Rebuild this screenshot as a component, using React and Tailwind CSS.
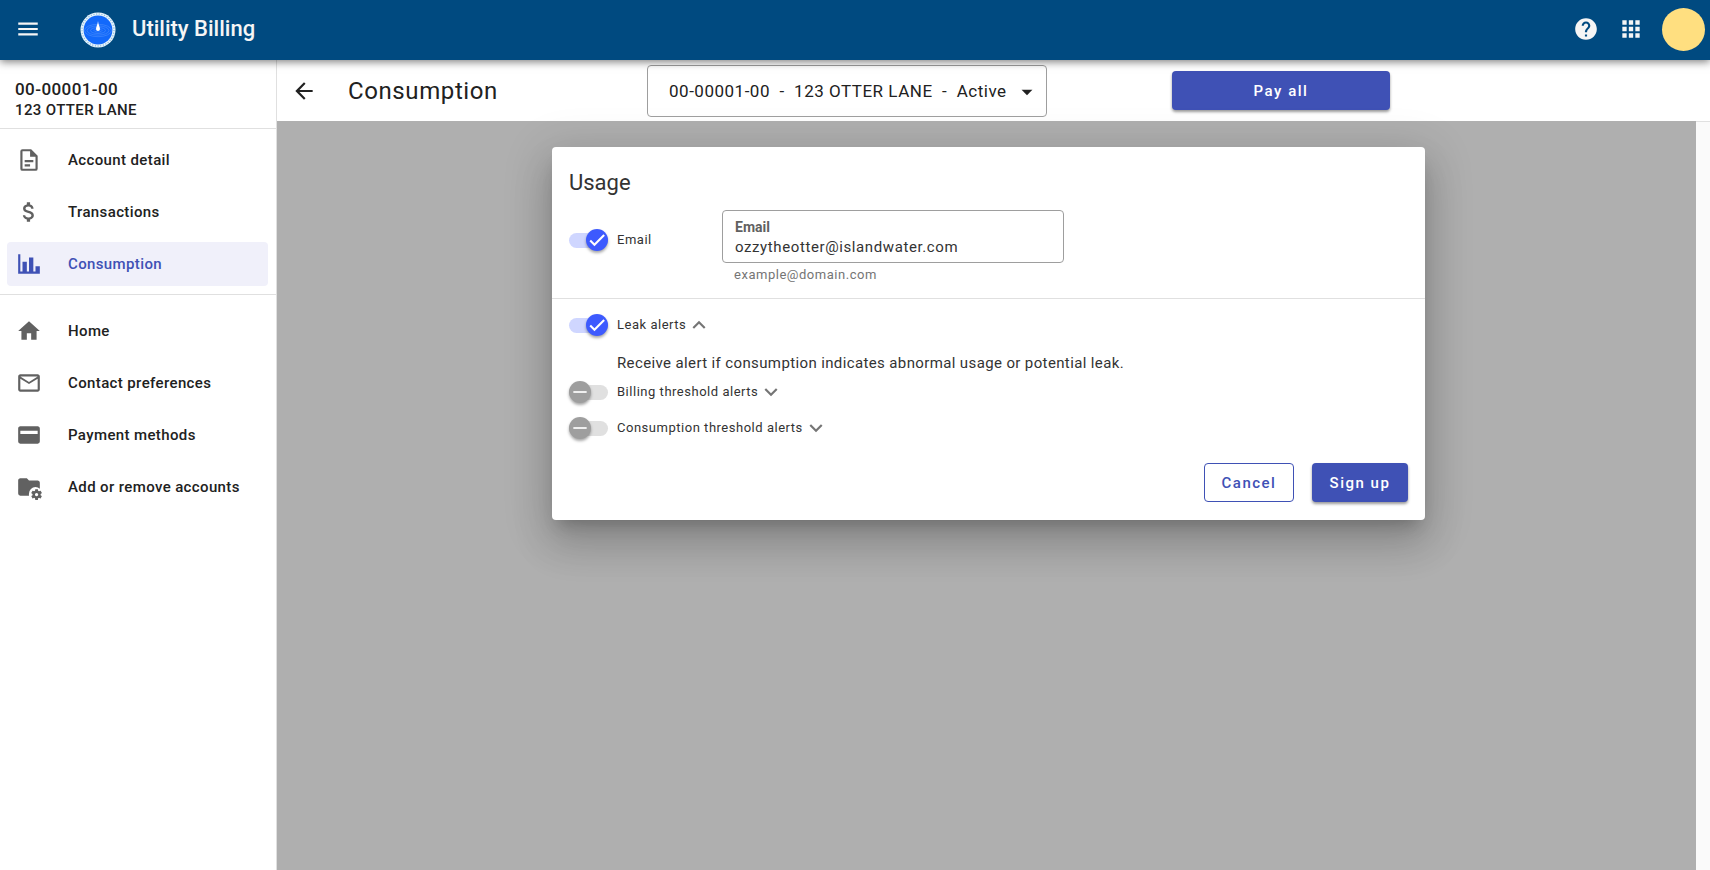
import { useState } from 'react'
import { MdMenu, MdHelp, MdApps, MdArrowBack, MdHome, MdMailOutline, MdAttachMoney, MdArrowDropDown, MdExpandMore, MdExpandLess } from 'react-icons/md'

function Icon({ d }) {
  return (
    <svg viewBox="0 0 24 24" className="size-[26px] shrink-0" fill="currentColor" aria-hidden="true">
      <path d={d} />
    </svg>
  )
}

const icons = {
  file: 'M6,2A2,2 0 0,0 4,4V20A2,2 0 0,0 6,22H18A2,2 0 0,0 20,20V8L14,2H6M6,4H13V9H18V20H6V4M8,12V14H16V12H8M8,16V18H13V16H8Z',
  chart: 'M22,21H2V3H4V19H6V10H10V19H12V6H16V19H18V14H22V21Z',
  card: 'M20,11H4V8H20M20,4H4C2.89,4 2,4.89 2,6V18A2,2 0 0,0 4,20H20A2,2 0 0,0 22,18V6C22,4.89 21.1,4 20,4Z',
  folderCog: 'M4 4C2.89 4 2 4.89 2 6V18A2 2 0 0 0 4 20H12A7 7 0 0 1 12 18A6 6 0 0 1 18 12A6 6 0 0 1 22 13.5V8C22 6.89 21.1 6 20 6H12L10 4H4M18 14C17.87 14 17.76 14.09 17.74 14.21L17.55 15.53C17.25 15.66 16.96 15.82 16.7 16L15.46 15.5C15.35 15.5 15.22 15.5 15.15 15.63L14.15 17.36C14.09 17.47 14.11 17.6 14.21 17.68L15.27 18.5C15.25 18.67 15.24 18.83 15.24 19C15.24 19.17 15.25 19.33 15.27 19.5L14.21 20.32C14.12 20.4 14.09 20.53 14.15 20.64L15.15 22.37C15.21 22.5 15.34 22.5 15.46 22.5L16.7 22C16.96 22.18 17.24 22.35 17.55 22.47L17.74 23.79C17.76 23.91 17.86 24 18 24H20C20.11 24 20.22 23.91 20.24 23.79L20.43 22.47C20.73 22.34 21 22.18 21.27 22L22.5 22.5C22.63 22.5 22.76 22.5 22.83 22.37L23.83 20.64C23.89 20.53 23.86 20.4 23.77 20.32L22.7 19.5C22.72 19.33 22.74 19.17 22.74 19C22.74 18.83 22.73 18.67 22.7 18.5L23.76 17.68C23.85 17.6 23.88 17.47 23.82 17.36L22.82 15.63C22.76 15.5 22.63 15.5 22.5 15.5L21.27 16C21 15.82 20.73 15.65 20.42 15.53L20.23 14.21C20.22 14.09 20.11 14 20 14H18M19 17.5C19.83 17.5 20.5 18.17 20.5 19C20.5 19.83 19.83 20.5 19 20.5C18.16 20.5 17.5 19.83 17.5 19C17.5 18.17 18.17 17.5 19 17.5Z',
}

const accountLinks = [
  { label: 'Account detail', icon: <Icon d={icons.file} /> },
  { label: 'Transactions', icon: <MdAttachMoney className="size-[26px] shrink-0" /> },
  { label: 'Consumption', icon: <Icon d={icons.chart} />, active: true },
]

const generalLinks = [
  { label: 'Home', icon: <MdHome className="size-[26px] shrink-0" /> },
  { label: 'Contact preferences', icon: <MdMailOutline className="size-[26px] shrink-0" /> },
  { label: 'Payment methods', icon: <Icon d={icons.card} /> },
  { label: 'Add or remove accounts', icon: <Icon d={icons.folderCog} /> },
]

function Logo() {
  return (
    <svg viewBox="0 0 36 36" className="size-9" aria-hidden="true">
      <circle cx="18" cy="18" r="17.5" fill="#e9f4fb" />
      <circle cx="18" cy="18" r="16" fill="none" stroke="#8fc0e4" strokeWidth="1.4" strokeDasharray="1.2 1.5" />
      <circle cx="18" cy="18" r="14.4" fill="#1269fb" />
      <g fill="none" stroke="#4a8dfb" strokeWidth="0.6">
        <ellipse cx="18" cy="18.5" rx="4" ry="1.5" />
        <ellipse cx="18" cy="18.5" rx="7.5" ry="3" />
        <ellipse cx="18" cy="18.5" rx="11" ry="4.6" />
        <ellipse cx="18" cy="18.5" rx="13.5" ry="6.2" />
      </g>
      <path d="M18 9c.3 3.500 2 6 2 8a2 2 0 0 1-4 0C16 15 17.700 12.500 18 9z" fill="#fff" />
    </svg>
  )
}

function NavList({ links }) {
  return (
    <ul className="flex flex-col gap-2 pr-2 pl-[7px]">
      {links.map((link) => (
        <li key={link.label}>
          <a
            href="#"
            aria-current={link.active ? 'page' : undefined}
            className={
              link.active
                ? 'flex h-11 items-center gap-[26px] rounded bg-[#f0f0fa] pl-[9px] text-[#3f51b5]'
                : 'flex h-11 items-center gap-[26px] rounded pl-[9px] text-[#616161]'
            }
          >
            {link.icon}
            <span className={link.active ? 'text-[15px] font-medium tracking-wide' : 'text-[15px] font-medium tracking-wide text-[#212121]'}>
              {link.label}
            </span>
          </a>
        </li>
      ))}
    </ul>
  )
}

function Toggle({ id, checked, onChange }) {
  return (
    <span className="relative flex h-6 w-[39px] shrink-0 items-center">
      <input
        id={id}
        type="checkbox"
        role="switch"
        checked={checked}
        onChange={(e) => onChange(e.target.checked)}
        className="h-[15px] w-full appearance-none rounded-full bg-[#e0e0e0] checked:bg-[#cfd6ff]"
      />
      <span
        className={
          checked
            ? 'pointer-events-none absolute right-0 flex size-[22px] items-center justify-center rounded-full bg-[#3d5afe] shadow-[0_2px_3px_rgba(0,0,0,0.35)]'
            : 'pointer-events-none absolute left-0 flex size-[22px] items-center justify-center rounded-full bg-[#9e9e9e] shadow-[0_2px_3px_rgba(0,0,0,0.35)]'
        }
      >
        <svg viewBox="0 0 24 24" className="size-5" fill="#fff" aria-hidden="true">
          <path d={checked ? 'M19.690 5.230L8.960 15.960l-4.230-4.230L2.960 13.500l6 6L21.460 7z' : 'M20 13H4v-2h16v2z'} />
        </svg>
      </span>
    </span>
  )
}

function AlertRow({ id, label, checked, onChange, open, onToggle }) {
  return (
    <div className="flex h-9 items-center">
      <Toggle id={id} checked={checked} onChange={onChange} />
      <label htmlFor={id} className="ml-[9px] text-[13px] tracking-[0.04em]">{label}</label>
      <button type="button" onClick={onToggle} aria-expanded={open} aria-label={label + ' details'} className="text-[#757575]">
        {open ? <MdExpandLess className="size-[26px]" /> : <MdExpandMore className="size-[26px]" />}
      </button>
    </div>
  )
}

function App() {
  const [email, setEmail] = useState('ozzytheotter@islandwater.com')
  const [emailOn, setEmailOn] = useState(true)
  const [leak, setLeak] = useState(true)
  const [billing, setBilling] = useState(false)
  const [threshold, setThreshold] = useState(false)
  const [openRow, setOpenRow] = useState('leak')

  const toggleRow = (name) => setOpenRow(openRow === name ? '' : name)

  return (
    <div className="flex min-h-screen flex-col bg-white font-['Roboto',sans-serif] text-base text-[#212121]">
      <header className="z-10 flex h-15 shrink-0 items-center bg-[#004a80] pr-[5px] pb-0.5 pl-[15px] text-[#f5f5f5] shadow-[0_2px_8px_rgba(0,0,0,0.5)]">
        <button type="button" aria-label="Menu">
          <MdMenu className="size-[26px]" />
        </button>
        <div className="ml-[39px] flex items-center gap-4 pt-0.5">
          <Logo />
          <h1 className="pb-1 text-[22px] font-medium">Utility Billing</h1>
        </div>
        <div className="ml-auto flex items-center">
          <button type="button" aria-label="Help">
            <MdHelp className="size-[26px]" />
          </button>
          <button type="button" aria-label="Apps" className="ml-[19px]">
            <MdApps className="size-[26px]" />
          </button>
          <button type="button" aria-label="Profile" className="ml-[18px] size-[43px] rounded-full bg-[#ffdf80]" />
        </div>
      </header>

      <div className="flex grow">
        <nav className="w-[277px] shrink-0 border-r border-[#e0e0e0]">
          <div className="border-b border-[#e0e0e0] px-[15px] pt-[19px] pb-[7px] font-medium">
            <p className="text-[17px] leading-5 tracking-wide">00-00001-00</p>
            <p className="text-[15px] leading-[22px] tracking-wide">123 OTTER LANE</p>
          </div>
          <div className="border-b border-[#e0e0e0] pt-[9px] pb-2">
            <NavList links={accountLinks} />
          </div>
          <div className="pt-[14px]">
            <NavList links={generalLinks} />
          </div>
        </nav>

        <main className="flex grow flex-col">
          <div className="flex h-[61px] shrink-0 items-center">
            <div className="flex w-[370px] items-center gap-[31px] pl-[14px]">
              <button type="button" aria-label="Back">
                <MdArrowBack className="size-[26px]" />
              </button>
              <h2 className="text-2xl tracking-wide">Consumption</h2>
            </div>
            <div className="relative w-[400px]">
              <select aria-label="Account" className="h-[52px] w-full appearance-none rounded border border-[#9e9e9e] pt-0.5 pl-[21px] text-[17px] tracking-[0.03em]">
                <option>{'00-00001-00 \u00a0-\u00a0 123 OTTER LANE \u00a0-\u00a0 Active'}</option>
              </select>
              <MdArrowDropDown className="pointer-events-none absolute top-[14px] right-[7px] size-[26px]" />
            </div>
            <button type="button" className="ml-[125px] h-[39px] w-[218px] rounded bg-[#3f51b5] pt-0.5 text-[15px] font-medium tracking-widest text-white shadow-[0_2px_3px_rgba(0,0,0,0.4)]">
              Pay all
            </button>
          </div>

          <div className="flex grow">
            <div className="flex grow items-start justify-center bg-[#afafaf] pt-[26px] pl-1">
              <form
                onSubmit={(e) => e.preventDefault()}
                className="w-full max-w-[873px] rounded bg-white text-[#333] shadow-[0_11px_15px_-7px_rgba(0,0,0,0.2),0_24px_38px_3px_rgba(0,0,0,0.14),0_9px_46px_8px_rgba(0,0,0,0.12)]"
              >
                <section className="border-b border-[#e0e0e0] px-[17px] pt-[21px] pb-[13px]">
                  <h3 className="text-[22px] leading-[30px]">Usage</h3>
                  <div className="mt-3 flex items-start">
                    <div className="flex h-[60px] w-[153px] items-center">
                      <Toggle id="email-on" checked={emailOn} onChange={setEmailOn} />
                      <label htmlFor="email-on" className="ml-[9px] text-[13px] tracking-[0.04em]">Email</label>
                    </div>
                    <div>
                      <div className="flex h-[53px] w-[342px] flex-col justify-center rounded border border-[#9e9e9e] px-3 pt-0.5">
                        <label htmlFor="email" className="text-sm font-bold text-[#616161]">Email</label>
                        <input
                          id="email"
                          type="email"
                          value={email}
                          onChange={(e) => setEmail(e.target.value)}
                          className="h-[22px] w-full text-[15px] tracking-[0.04em] outline-none"
                        />
                      </div>
                      <p className="mt-0.5 px-3 text-[13px] leading-5 tracking-[0.04em] text-[#757575]">example@domain.com</p>
                    </div>
                  </div>
                </section>

                <section className="px-[17px] pt-2 pb-[18px]">
                  <AlertRow id="leak" label="Leak alerts" checked={leak} onChange={setLeak} open={openRow === 'leak'} onToggle={() => toggleRow('leak')} />
                  {openRow === 'leak' && (
                    <p className="mt-[9px] pl-12 text-[15px] leading-[22px] tracking-wide">
                      Receive alert if consumption indicates abnormal usage or potential leak.
                    </p>
                  )}
                  <AlertRow id="billing" label="Billing threshold alerts" checked={billing} onChange={setBilling} open={openRow === 'billing'} onToggle={() => toggleRow('billing')} />
                  <AlertRow id="threshold" label="Consumption threshold alerts" checked={threshold} onChange={setThreshold} open={openRow === 'threshold'} onToggle={() => toggleRow('threshold')} />
                  <div className="mt-[17px] flex justify-end gap-[18px] text-[15px] font-medium tracking-widest">
                    <button type="button" className="h-[39px] w-[90px] rounded border border-[#3f51b5] pt-0.5 text-[#3f51b5]">
                      Cancel
                    </button>
                    <button type="submit" className="h-[39px] w-24 rounded bg-[#3f51b5] pt-0.5 text-white shadow-[0_2px_3px_rgba(0,0,0,0.4)]">
                      Sign up
                    </button>
                  </div>
                </section>
              </form>
            </div>
            <div className="w-[14px] shrink-0 border-t border-[#e0e0e0] bg-[#fafafa]" />
          </div>
        </main>
      </div>
    </div>
  )
}

export default App
